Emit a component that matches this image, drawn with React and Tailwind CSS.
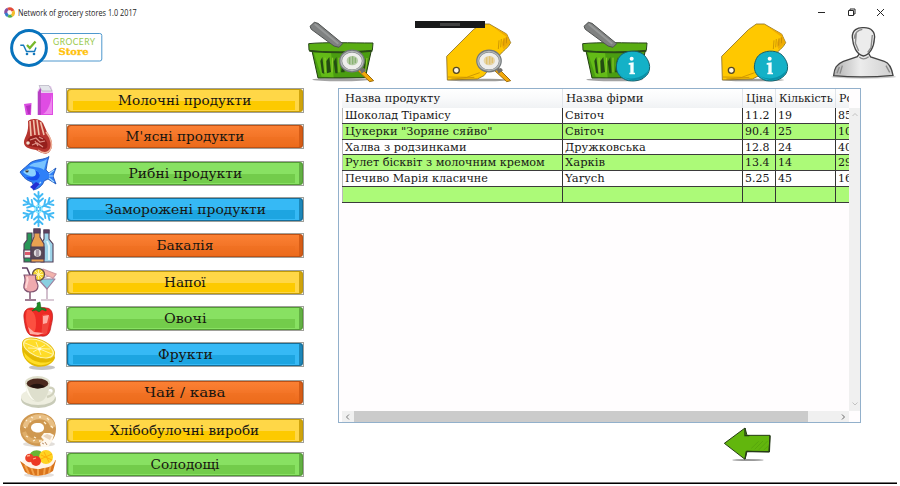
import React, { useLayoutEffect, useRef } from "react";

const SERIF = "font-['DejaVu_Serif',serif]";

// Text stretched horizontally so that it spans the given width.
function Fit({ width, className = "origin-left", children }) {
  const ref = useRef(null);
  useLayoutEffect(() => {
    const el = ref.current;
    el.style.transform = `scaleX(${width / el.offsetWidth})`;
  }, [width, children]);
  return (
    <span ref={ref} className={`inline-block whitespace-pre ${className}`}>
      {children}
    </span>
  );
}

function Milk() {
  return (
    <>
      <path d="M6 21 L13.5 20 L13 32 H8 Z" fill="#d94be0" />
      <path d="M8 23 L13 22 L12 31 H10Z" fill="#b62fc0" />
      <path d="M19 9 L22 3 H33 L35 9 V32 H19 Z" fill="#e9ccf0" />
      <path d="M20 9 L23 4 V32 H20Z" fill="#b83fc4" />
      <path d="M23 10 H35 V32 H23Z" fill="#df4ce3" />
      <path d="M25 31 C30 28 33 20 34 11 V31Z" fill="#ee86ee" />
      <path d="M21 2.5 H31 L34 8 H24Z" fill="#e4e6ec" stroke="#a9a5b5" strokeWidth=".6" />
    </>
  );
}

function Meat() {
  return (
    <>
      <path d="M10 2 C13 -1 22 -1 25 4 L29 13 C34 20 36 27 32 32 C29 37 23 34 18 31 C11 30 5 28 6 22 C7 17 11 14 10 2Z" fill="#b6352f" />
      <path d="M12 2 L13 17 M15.5 1 L17 16 M19 1 L21 16 M22.5 3 L26 16" stroke="#f0c3ad" strokeWidth="1.6" fill="none" />
      <path d="M10 20 C15 15 23 16 27 20 C31 25 30 31 25 30 C20 27 12 29 8 25Z" fill="#951f1c" />
      <path d="M12 21 L18 19 L22 23 L27 22 M14 26 L19 24 L25 28 M21 18 L25 20 M17 22 L20 27" stroke="#df9389" strokeWidth="1.2" fill="none" />
      <path d="M28 13 C34 20 35 28 31 32 C28 35 23 33 20 31" stroke="#efb49b" strokeWidth="1.5" fill="none" />
      <circle cx="10" cy="24" r="1.8" fill="#f4ddcd" />
    </>
  );
}

function Fish() {
  return (
    <>
      <path d="M2 16 C6 12 9 10 12 7 C17 3 27 4 31 .5 C29 6 29 10 28 14 L31 17 L38 12 L35 20 L38 28 L30 23 L26 25 C25 29 21 33 15 34 C17 31 15 29 14 26 C8 24 6 22 2 16Z" fill="#2e80f8" stroke="#174caf" strokeWidth=".8" />
      <path d="M11 10 C16 5 25 7 29 3 L26 14 C21 10 16 12 11 10Z" fill="#79c3ff" />
      <path d="M5 16 C10 10 18 12 22 18 C18 22 10 21 5 16Z" fill="#8ad1ff" />
      <path d="M17 14 C23 16 23 21 19 24 C14 25 10 24 8 21 C16 22 20 20 17 14Z" fill="#1450ed" />
      <path d="M31 18 L36 14 M31 20 H35 M31 22 L36 26 M18 31 L23 26" stroke="#a5d9ff" strokeWidth="1.2" />
      <path d="M12 31 L18 26 L22 28 L16 34Z" fill="#222fd2" />
      <circle cx="9" cy="15" r="1.6" fill="#3a3836" /><circle cx="9" cy="14.5" r=".6" fill="#fff" />
    </>
  );
}

function Snow() {
  return (
    <g stroke="#42baf5" strokeWidth="1.9" strokeLinecap="round" fill="none">
      {[0, 60, 120, 180, 240, 300].map((a) => (
        <path key={a} transform={`translate(20.5 17) rotate(${a})`} d="M0 -1 V-17 M-4 -15 L0 -11 L4 -15 M-4.5 -10.5 L0 -6.5 L4.5 -10.5" />
      ))}
      <circle cx="20.5" cy="17" r="3.5" stroke="#7eeaff" strokeWidth="1.2" />
      <circle cx="20.5" cy="17" r="1" fill="#fff" stroke="none" />
    </g>
  );
}

function Bottles() {
  return (
    <g stroke="#513e58" strokeWidth="1.1">
      <path d="M9 5 H14 V12 L17 16 V34 H6 V16 L9 12Z" fill="#299657" />
      <path d="M6 22 H17 V30 H6Z" fill="#f5ecec" /><path d="M7 24 H16 V27 H7Z" fill="#dd596b" stroke="none" />
      <path d="M26 2 H31 V11 L35 16 V34 H23 V16 L26 11Z" fill="#9ed4e9" />
      <path d="M26 2 H31 V5 H26Z" fill="#62405e" />
      <path d="M29 13 L31 18 V32" stroke="#e0f6fb" strokeWidth="2" fill="none" />
      <path d="M16 1 H22 V9 L26 16 V34 H13 V16 L16 9Z" fill="#e9a151" />
      <path d="M16 1 H22 V5 H16Z" fill="#62405e" />
      <path d="M13 19 H26 V31 H13Z" fill="#574856" />
      <circle cx="19.5" cy="25" r="3.7" fill="#ddd8db" stroke="none" />
      <path d="M18 23 H21 M18 25 H21 M18 27 H21" strokeWidth=".8" />
    </g>
  );
}

function Drinks() {
  return (
    <g stroke="#805472" strokeWidth="1.2" strokeLinejoin="round">
      <path d="M4 3 H9 L12 10" fill="none" stroke="#604064" strokeWidth="1.6" />
      <path d="M21 14 L38 9 L29 22 V34 M23 35 H36" fill="none" stroke="#b595ac" />
      <path d="M20 14 H37 L29 24Z" fill="#89cfe0" stroke="#9c7f9c" />
      <path d="M23 8 L25 4 L38 9 L35 13Z" fill="#f2b3ac" stroke="#d39ba5" />
      <circle cx="20.5" cy="9.5" r="6" fill="#f5d633" stroke="#5f4b48" />
      <path d="M20.5 5 V14 M16 9.5 H25 M17 6 L24 13 M24 6 L17 13" stroke="#fff6ae" strokeWidth=".9" />
      <path d="M6 10 H18 C16 14 20 18 20 21 C20 25 17 27 12 27 C8 27 5 24 6 20 C7 17 8 14 6 10Z" fill="#efaaae" />
      <path d="M9 12 C11 16 8 18 8 23" fill="none" stroke="#ffd5d4" strokeWidth="2" />
      <path d="M12 27 V34 M7 35 H18" strokeWidth="1.5" />
    </g>
  );
}

function Pepper() {
  return (
    <>
      <path d="M18 8 C10 5 5 9 6 17 C7 25 8 31 12 34 C17 36 20 35 23 35 C29 36 32 33 33 25 C36 15 35 7 28 7 C24 6 21 7 18 8Z" fill="#ee2a25" stroke="#b51a18" strokeWidth=".7" />
      <path d="M9 9 C14 8 18 13 18 22 C18 29 16 34 13 32 C8 26 7 16 9 9Z" fill="#fc5040" />
      <path d="M24 14 C29 12 33 14 32 18 L29 32 C24 36 23 31 24 27Z" fill="#f1473d" />
      <path d="M25 15 L31 14 L29 22 L25 23Z M10 26 L16 31 L26 32 L20 34 L12 33Z" fill="#ffaca3" />
      <path d="M14 10 C17 6 20 7 19 2 L22 1 L23 7 C27 7 29 8 28 10 L24 8.5 L21 11 L18 9Z" fill="#218b25" stroke="#11601a" strokeWidth=".5" />
    </>
  );
}

function Lemon() {
  return (
    <>
      <ellipse cx="24" cy="30.5" rx="13" ry="2.4" fill="#9d9d9d" opacity=".6" />
      <path d="M5 4 C2 15 6 24 14 28 C22 32 34 29 37 21 L36 16Z" fill="#e3b900" />
      <path d="M6 15 C12 24 25 29 35 23 C27 32 12 28 7 20Z" fill="#ffde28" />
      <ellipse cx="20.5" cy="11.5" rx="17" ry="8.8" transform="rotate(23 20.5 11.5)" fill="#fff4a6" stroke="#e5bc11" />
      <ellipse cx="20.5" cy="11.5" rx="15" ry="7.3" transform="rotate(23 20.5 11.5)" fill="#ffdc28" />
      <path d="M7 6 L34 17 M18 5 L23 18 M27 8 L15 15 M10 11 L32 12" stroke="#fff2a0" strokeWidth="1" />
      <circle cx="21.5" cy="12" r="1.6" fill="#fffbe0" />
    </>
  );
}

function Coffee() {
  return (
    <>
      <ellipse cx="20.5" cy="24" rx="17.5" ry="9" fill="#c8cbb8" />
      <ellipse cx="20" cy="22" rx="17" ry="8" fill="#eeeedf" />
      <path d="M30 13 C38 11 38 20 29 22" fill="none" stroke="#d0d1bd" strokeWidth="2.4" />
      <path d="M7 7 C8 18 12 27 20 27 C27 27 31 18 32 8Z" fill="#dedfcd" />
      <path d="M9 12 C12 20 14 24 18 26 C12 25 8 18 7 9Z" fill="#fcfcf2" />
      <ellipse cx="19.5" cy="7.5" rx="12.5" ry="6.5" fill="#e0e0cd" />
      <ellipse cx="19.5" cy="8.5" rx="10.8" ry="5" fill="#4b291e" />
      <path d="M12 11 C17 7 25 9 27 12 C22 14 16 14 12 11Z" fill="#24140f" />
    </>
  );
}

function Donut() {
  return (
    <>
      <ellipse cx="21" cy="31" rx="16" ry="3" fill="#c5bdb4" opacity=".5" />
      <path fillRule="evenodd" d="M20 0 C31 0 38 6 38 16 C38 26 32 32 21 33 C10 33 2 26 2 16 C2 7 9 0 20 0Z M20 10 C15 10 13 12 13 15 C14 21 26 21 26 15 C26 12 24 10 20 10Z" fill="#cf9850" />
      <path d="M7 14 C9 5 19 2 28 5 C32 7 34 10 35 14" fill="none" stroke="#e8bf84" strokeWidth="5" />
      <path d="M6 19 C9 28 18 30 27 27" fill="none" stroke="#dfae69" strokeWidth="4" />
      <path d="M8 7 L9 8 M13 4 L15 5 M21 4 H23 M29 5 L31 7 M6 14 L8 15 M33 13 L35 15 M8 23 L10 24 M15 28 L17 27 M12 9 L13 8 M26 9 L28 11 M16 24 L18 25 M21 28 L24 28" stroke="#fff1d4" strokeWidth="1.3" />
      <path d="M23 24 L26 20 L32 20 L36 22 L34 28 L30 34 H23 L22 30 L26 27Z" fill="#fff8ed" />
      <path d="M25 23 L29 21 L34 23 L32 27 L28 25Z" fill="#ead4bb" /><path d="M24 30 L26 31 M27 29 L29 32" stroke="#bc9472" />
    </>
  );
}

function Tart() {
  return (
    <>
      <ellipse cx="21" cy="28" rx="15" ry="2.5" fill="#c9c0b9" opacity=".5" />
      <path d="M2 14 L8 18 L33 16 L38 13 L35 24 C27 30 14 30 7 25Z" fill="#d9731b" />
      <path d="M7 18 L11 27 M13 20 L16 28 M20 20 V29 M27 19 L26 28 M33 17 L31 26" stroke="#f4a24b" strokeWidth="2" />
      <path d="M4 14 C8 11 32 9 37 14 C34 22 26 20 22 22 C16 22 8 21 4 14Z" fill="#fff3e6" />
      <path d="M12 10 C10 4 21 0 25 7 L20 13Z" fill="#6ab533" />
      <circle cx="28" cy="10" r="7" fill="#ffd321" /><path d="M23 12 L34 7 M26 5 L31 15 M23 8 L34 13" stroke="#ffae0b" />
      <circle cx="11.5" cy="11" r="4.3" fill="#ec4129" /><circle cx="18" cy="14" r="5" fill="#ed3824" />
      <path d="M9 9 L12 8.5 M15 12 L18 11" stroke="#ffad88" strokeWidth="1.3" />
    </>
  );
}

const TONES = {
  yellow: { edge: "bg-[#c29b08]", top: "bg-[#ffd747]", low: "bg-[#fdca00]", rim: "border-l-[#eec233] border-r-[#cfa30c]" },
  orange: { edge: "bg-[#bd5115]", top: "bg-linear-to-b from-[#fb8033] to-[#ec6a1a]", low: "bg-[#ee6e1e]/40", rim: "border-l-[#e8702a] border-r-[#d65c15]" },
  green: { edge: "bg-[#539b35]", top: "bg-[#88e162]", low: "bg-[#73cc4b]", rim: "border-l-[#72c94f] border-r-[#62b043]" },
  blue: { edge: "bg-[#176d98]", top: "bg-[#36b9f5]", low: "bg-[#1da5e1]", rim: "border-l-[#27a6e0] border-r-[#1c87b9]" },
};

const CATEGORIES = [
  { label: "Молочні продукти", tone: "yellow", width: 133, gap: "", Icon: Milk },
  { label: "М'ясні продукти", tone: "orange", width: 119, gap: "mt-[11px]", Icon: Meat },
  { label: "Рибні продукти", tone: "green", width: 114, gap: "mt-[12px]", Icon: Fish },
  { label: "Заморожені продукти", tone: "blue", width: 161, gap: "mt-[11px]", Icon: Snow },
  { label: "Бакалія", tone: "orange", width: 57, gap: "mt-[11px]", Icon: Bottles },
  { label: "Напої", tone: "yellow", width: 42, gap: "mt-[12px]", Icon: Drinks },
  { label: "Овочі", tone: "green", width: 43, gap: "mt-[11px]", Icon: Pepper },
  { label: "Фрукти", tone: "blue", width: 55, gap: "mt-[11px]", Icon: Lemon },
  { label: "Чай / кава", tone: "orange", width: 81, gap: "mt-[13px]", Icon: Coffee },
  { label: "Хлібобулочні вироби", tone: "yellow", width: 149, gap: "mt-[13px]", Icon: Donut },
  { label: "Солодощі", tone: "green", width: 69, gap: "mt-[9px]", Icon: Tart },
];

function Category({ label, tone, width, gap, Icon }) {
  const t = TONES[tone];
  return (
    <div className={`flex h-[25px] items-center gap-2 ${gap}`}>
      <svg className="h-9 w-10 shrink-0 overflow-visible" viewBox="0 0 40 36"><Icon /></svg>
      <button className="grid h-[25px] w-[238px] border border-[#a0a09a] bg-white">
        <span className={`col-start-1 row-start-1 rounded-[3px] ${t.edge} grid px-px py-px`}>
          <span className={`flex flex-col justify-end rounded-[3px] border-l border-r-[3px] pb-px pl-[4px] pr-[4px] ${t.rim} ${t.top}`}>
            <span className={`h-[9px] ${t.low}`} />
          </span>
        </span>
        <span className={`col-start-1 row-start-1 self-center text-center text-[13px] leading-[22px] text-[#171510] ${SERIF}`}>
          <Fit width={width} className="origin-center">{label}</Fit>
        </span>
      </button>
    </div>
  );
}

function Magnifier({ tint }) {
  return (
    <>
      <path d="M197 173 L236 212 L224 215 L186 180Z" fill="#f4a90b" stroke="#9b6d11" strokeWidth="3" />
      <path d="M193 177 L207 174 L213 181 L200 191Z" fill="#726f6b" />
      <ellipse cx="171" cy="153" rx="34" ry="30" fill="#eeeeec" stroke="#74797b" strokeWidth="9" />
      <ellipse cx="171" cy="153" rx="33" ry="29" fill="none" stroke="#b4b8b8" strokeWidth="4" />
      <ellipse cx="172" cy="152" rx="17" ry="14" fill={tint} opacity=".5" />
      <path d="M164 142 V163 M173 139 V163 M181 143 V159" stroke={tint} strokeWidth="4" opacity=".7" />
    </>
  );
}

function InfoBall() {
  return (
    <>
      <path d="M164 130 C181 120 212 121 226 136 C240 151 248 172 236 192 C224 208 203 216 178 212 C156 206 142 190 142 171 C143 152 150 137 164 130Z" fill="#14b1c7" stroke="#17616d" strokeWidth="3" />
      <path d="M151 188 C166 213 216 211 238 181 C229 215 178 222 151 188Z" fill="#0990a7" />
      <circle cx="188" cy="146" r="6" fill="#fff" />
      <path d="M179 159 L194 157 V188 H198 V193 H181 V188 H184 V164 H179Z" fill="#f2ffff" />
    </>
  );
}

function Basket({ children }) {
  return (
    <svg className="h-[67px] w-[73px] shrink-0" viewBox="30 24 219 201">
      <ellipse cx="137" cy="209" rx="85" ry="5" fill="#686868" opacity=".6" />
      <path d="M50 118 L69 204 L211 203 L230 117Z" fill="#4a9d10" stroke="#203d10" strokeWidth="3" />
      <path d="M57 130 L80 200 L116 202 L108 127Z" fill="#63bb17" />
      <path d="M82 141 L76 153 L81 188 L88 192Z M103 141 L94 153 L96 190 L108 186Z M124 141 L116 155 L121 190 H128Z M145 141 L138 187 H149Z M211 145 L204 180 L214 187Z" fill="#244c12" />
      <path d="M90 143 L91 187 M113 143 L111 187 M132 143 V187 M216 144 L210 194" stroke="#93ca2f" strokeWidth="3" />
      <path d="M41 101 C87 96 170 99 234 99 L232 121 C184 126 84 128 42 121Z" fill="#5aad13" stroke="#29451b" strokeWidth="3" />
      <path d="M43 123 Q140 133 232 123" fill="none" stroke="#294a15" strokeWidth="4" />
      <path d="M45 49 L58 37 L69 40 L143 101 L132 112 L117 108 L49 58Z" fill="#7f8181" stroke="#4f5251" strokeWidth="3" />
      <path d="M59 42 L130 101" stroke="#979999" strokeWidth="6" />
      {children}
    </svg>
  );
}

function Tag({ children }) {
  return (
    <svg className="h-[67px] w-[73px] shrink-0" viewBox="450 24 219 201">
      <ellipse cx="552" cy="210" rx="93" ry="4" fill="#5b5b57" opacity=".6" />
      <path d="M458 139 L538 59 L562 42 L586 42 L638 72 L650 98 C643 114 626 123 618 134 L570 197 L550 207 L460 210Z" fill="#ffc800" stroke="#8d7026" strokeWidth="2.5" />
      <path d="M590 46 L638 73 L649 98 L629 118 Q615 96 637 80Z" fill="#eeab05" />
      <path d="M615 91 L613 117 M622 87 L620 112 M630 85 L629 107 M638 82 L637 100 M462 201 L518 202 L557 188 M472 207 L541 202" stroke="#b78005" strokeWidth="2" fill="none" />
      <circle cx="487" cy="181" r="9" fill="#fff6df" stroke="#554823" strokeWidth="4" />
      <g transform="translate(414 0)">{children}</g>
    </svg>
  );
}

function Person() {
  return (
    <svg className="h-[58px] w-[66px] shrink-0" viewBox="150 72 198 174">
      <defs>
        <linearGradient id="skin"><stop stopColor="#b1b1b1" /><stop offset=".45" stopColor="#ececec" /><stop offset="1" stopColor="#cfcfcf" /></linearGradient>
      </defs>
      <ellipse cx="251" cy="230" rx="97" ry="6" fill="#9a9a9a" opacity=".5" />
      <path d="M161 227 C163 204 169 193 190 184 L232 170 L239 160 L265 159 L272 171 L313 184 C331 190 336 209 339 226 C289 231 216 232 161 227Z" fill="url(#skin)" stroke="#454545" strokeWidth="4" />
      <path d="M217 112 C216 90 233 82 250 83 C274 82 287 97 283 117 C282 143 268 165 250 168 C229 164 219 138 217 112Z" fill="#ececec" stroke="#444" strokeWidth="4" />
      <path d="M223 116 C224 100 232 90 247 88 M225 127 L236 153 M277 105 L273 143 L263 157 M229 97 L226 134 M238 171 Q250 183 266 170 M178 201 L171 220 M187 197 L180 221 M318 197 L329 217" fill="none" stroke="#8a8a8a" strokeWidth="4" />
    </svg>
  );
}

function Logo() {
  return (
    <svg className="h-10 w-[93px] shrink-0" viewBox="10 28 93 40">
      <rect x="38" y="33.5" width="63.8" height="27.5" rx="2" fill="#fff" stroke="#4e98ce" />
      <circle cx="29" cy="48" r="17.4" fill="#fff" stroke="#0873bd" strokeWidth="3" />
      <path d="M20.3 45.3 H23.5 L26.5 51.5 H34.5 L36 47.5" fill="none" stroke="#1478bc" strokeWidth="1.4" />
      <circle cx="27" cy="54" r="1.3" fill="#1478bc" /><circle cx="34" cy="54" r="1.3" fill="#1478bc" />
      <path d="M27 45 L29.8 48 L35.5 41.5" fill="none" stroke="#76b82a" strokeWidth="2.3" />
      <text x="53" y="44.6" textLength="42" className="fill-[#9aca4c] font-['Lato',sans-serif] text-[8.5px]">GROCERY</text>
      <text x="58.5" y="55" textLength="30" lengthAdjust="spacingAndGlyphs" className="fill-[#ffc20c] stroke-[#ffc20c] font-['DejaVu_Serif',serif] text-[9.5px] font-bold" strokeWidth=".3">Store</text>
    </svg>
  );
}

const PRODUCTS = [
  { h: "h-4", cells: [["Шоколад Тірамісу", 106], ["Світоч", 39], ["11.2", 25], ["19", 14], ["85", 14]] },
  { h: "h-4", cells: [["Цукерки \"Зоряне сяйво\"", 147], ["Світоч", 39], ["90.4", 25], ["25", 14], ["10", 14]] },
  { h: "h-[15px]", cells: [["Халва з родзинками", 122], ["Дружковська", 81], ["12.8", 25], ["24", 14], ["40", 14]] },
  { h: "h-4", cells: [["Рулет бісквіт з молочним кремом", 200], ["Харків", 40], ["13.4", 25], ["14", 14], ["29", 14]] },
  { h: "h-4", cells: [["Печиво Марія класичне", 143], ["Yarych", 40], ["5.25", 25], ["45", 14], ["16", 14]] },
  { h: "h-4", cells: [["", 0], ["", 0], ["", 0], ["", 0], ["", 0]] },
];
const HEAD = [["Назва продукту", 95], ["Назва фірми", 77], ["Ціна", 27], ["Кількість", 54], ["Ро", 14]];
const COLS = "grid grid-cols-[221px_180px_33px_60px_13px]";

function ProductTable() {
  return (
    <section className={`ml-[34px] flex h-[335px] w-[523px] flex-col border border-[#92b0cb] bg-[#fffdfe] pl-[3px] text-[11px] text-[#171717] ${SERIF}`}>
      <div className="flex h-[322px]">
        <div className="w-[507px] overflow-hidden">
          <div className={`${COLS} h-[19px] bg-linear-to-b from-white via-[#f9fafb] to-[#f0f2f4]`}>
            {HEAD.map(([text, w]) => (
              <div key={text} className="border-r border-[#e0e4e9] pl-[3px] leading-[19px] last:border-r-0"><Fit width={w}>{text}</Fit></div>
            ))}
          </div>
          {PRODUCTS.map((row, i) => (
            <div key={i} className={`${COLS} ${row.h} border-b border-[#3b3b3b] ${i % 2 ? "bg-[#acfa78]" : "bg-white"}`}>
              {row.cells.map(([text, w], j) => (
                <div key={j} className={`border-r border-[#343434] leading-[15px] last:border-r-0 ${j === 0 ? "border-l border-l-[#b9b9b9] pl-[2px]" : "pl-[2px]"}`}>
                  {text && <Fit width={w}>{text}</Fit>}
                </div>
              ))}
            </div>
          ))}
        </div>
        <div className="mt-[19px] flex w-[11px] flex-col items-center justify-between bg-[#f0f0f0] py-1">
          <svg className="h-1.5 w-2" viewBox="0 0 8 6"><path d="M1.5 4 L4 1.5 L6.5 4" fill="none" stroke="#c2c2c2" /></svg>
          <svg className="h-1.5 w-2" viewBox="0 0 8 6"><path d="M1.5 1.5 L4 4 L6.5 1.5" fill="none" stroke="#c2c2c2" /></svg>
        </div>
      </div>
      <div className="flex h-[11px] w-[507px] items-center bg-[#f0f0f0]">
        <svg className="h-2 w-[12px]" viewBox="0 0 12 8"><path d="M7 1.5 L4.5 4 L7 6.5" fill="none" stroke="#777" /></svg>
        <div className="h-[11px] w-[455px] bg-[#cbcbcb]" />
        <svg className="ml-[29px] h-2 w-[12px]" viewBox="0 0 12 8"><path d="M5 1.5 L7.5 4 L5 6.5" fill="none" stroke="#666" /></svg>
      </div>
    </section>
  );
}

export default function App() {
  return (
    <div className="relative flex h-[486px] w-[900px] flex-col overflow-hidden bg-white">
      <header className="flex h-[18px] items-end pl-1">
        <svg className="h-[11px] w-[11px]" viewBox="0 0 11 11">
          <g fill="none" strokeWidth="3">
            <path d="M2 6.5 A3.7 3.7 0 0 1 4 2" stroke="#8651a4" />
            <path d="M4 2 A3.7 3.7 0 0 1 9 4" stroke="#e34b38" />
            <path d="M9 4 A3.7 3.7 0 0 1 7.7 8.7" stroke="#f5bd2d" />
            <path d="M7.7 8.7 A3.7 3.7 0 0 1 4 8.7" stroke="#54ae4b" />
            <path d="M4 8.7 A3.7 3.7 0 0 1 2 6" stroke="#337ccd" />
          </g>
        </svg>
        <span className="ml-[3px] w-[130px] font-['Open_Sans',sans-serif] text-[9px] leading-[10px] text-[#222]"><Fit width={119}>Network of grocery stores 1.0 2017</Fit></span>
        <svg className="ml-auto mr-[13px] h-3 w-[72px]" viewBox="0 0 72 12">
          <path d="M3 6.5 H10 M33.5 4.5 H38.5 V9.5 H33.5 Z M35 4.5 V3 H40 V8 H38.5 M62 3 L69 10 M69 3 L62 10" fill="none" stroke="#272727" strokeWidth="1" />
        </svg>
      </header>
      <nav className="flex h-[70px] items-start pl-[10px]">
        <div className="mt-[10px]"><Logo /></div>
        <div className="ml-[202px] flex">
          <Basket><Magnifier tint="#79a85e" /></Basket>
          <div className="ml-[66px] flex"><Tag><Magnifier tint="#deb95b" /></Tag></div>
          <div className="ml-[62px] flex"><Basket><InfoBall /></Basket></div>
          <div className="ml-[67px] flex"><Tag><InfoBall /></Tag></div>
          <div className="ml-[38px] mt-[6px] flex"><Person /></div>
        </div>
      </nav>
      <main className="flex h-[394px] items-start pl-[18px]">
        <aside className="w-[286px]">
          {CATEGORIES.map((c) => <Category key={c.label} {...c} />)}
        </aside>
        <div className="flex flex-col">
          <ProductTable />
          <svg className="ml-[419px] mt-[3px] h-9 w-[50px]" viewBox="70 78 150 108">
            <ellipse cx="145" cy="180" rx="47" ry="3" fill="#555" opacity=".6" />
            <path d="M74 130 L136 84 L142 106 L211 106 L208 156 L142 154 L136 178Z" fill="#62b60d" stroke="#263c15" strokeWidth="3" />
            <path d="M140 154 L209 155 L211 107 M136 84 V107 H149 M136 177 L140 154" fill="none" stroke="#263b18" strokeWidth="4" />
            <path d="M155 145 L177 124 M165 148 L190 123 M178 149 L204 123 M192 150 L206 138" stroke="#529f0c" strokeWidth="2" />
          </svg>
        </div>
      </main>
      <footer className="ml-[3px] mr-[3px] h-[2px] border-t border-[#777] bg-black" />
      <div className="absolute left-[415px] top-[21px] flex h-[7px] w-[70px] items-center justify-center bg-[#18191a]">
        <div className="h-[3px] w-5 bg-[#414242]" />
      </div>
    </div>
  );
}
